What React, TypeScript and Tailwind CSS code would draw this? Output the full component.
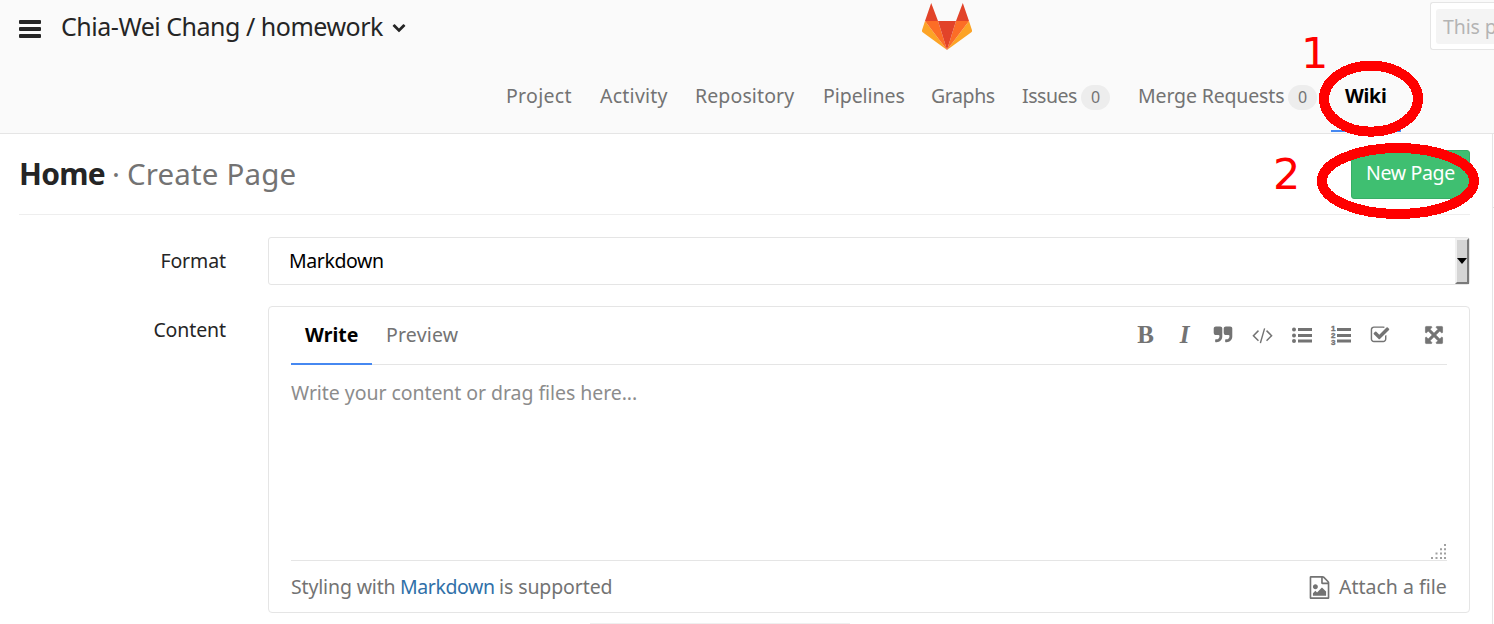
import type { ReactNode } from 'react';

const quotePath =
  'M832 320v704q0 104-40.5 198.5t-109.5 163.5-163.5 109.5-198.5 40.5h-64q-26 0-45-19t-19-45v-128q0-26 19-45t45-19h64q106 0 181-75t75-181v-32q0-40-28-68t-68-28h-224q-80 0-136-56t-56-136v-384q0-80 56-136t136-56h384q80 0 136 56t56 136zm896 0v704q0 104-40.5 198.5t-109.5 163.5-163.5 109.5-198.5 40.5h-64q-26 0-45-19t-19-45v-128q0-26 19-45t45-19h64q106 0 181-75t75-181v-32q0-40-28-68t-68-28h-224q-80 0-136-56t-56-136v-384q0-80 56-136t136-56h384q80 0 136 56t56 136z';
const codePath =
  'M617 1399l-50 50q-10 10-23 10t-23-10l-466-466q-10-10-10-23t10-23l466-466q10-10 23-10t23 10l50 50q10 10 10 23t-10 23l-393 393 393 393q10 10 10 23t-10 23zm591-1067l-373 1291q-4 13-15.5 19.5t-23.5 2.5l-62-17q-13-4-19.5-15.5t-2.5-24.5l373-1291q4-13 15.5-19.5t23.5-2.5l62 17q13 4 19.5 15.5t2.5 24.5zm657 651l-466 466q-10 10-23 10t-23-10l-50-50q-10-10-10-23t10-23l393-393-393-393q-10-10-10-23t10-23l50-50q10-10 23-10t23 10l466 466q10 10 10 23t-10 23z';
const checkPath =
  'M1472 930v318q0 119-84.5 203.5t-203.5 84.5h-832q-119 0-203.5-84.5t-84.5-203.5v-832q0-119 84.5-203.5t203.5-84.5h832q63 0 117 25 15 7 18 23 3 17-9 29l-49 49q-10 10-23 10-3 0-9-2-23-6-45-6h-832q-66 0-113 47t-47 113v832q0 66 47 113t113 47h832q66 0 113-47t47-113v-254q0-13 9-22l64-64q10-10 23-10 6 0 12 3 20 8 20 29zm231-489l-814 814q-24 24-57 24t-57-24l-430-430q-24-24-24-57t24-57l110-110q24-24 57-24t57 24l263 263 647-647q24-24 57-24t57 24l110 110q24 24 24 57t-24 57z';
const expandPath =
  'M1411 541l-355 355 355 355 144-144q29-31 70-14 39 17 39 59v448q0 26-19 45t-45 19h-448q-42 0-59-40-17-39 14-69l144-144-355-355-355 355 144 144q31 30 14 69-17 40-59 40h-448q-26 0-45-19t-19-45v-448q0-42 40-59 39-17 69 14l144 144 355-355-355-355-144 144q-19 19-45 19-12 0-24-5-40-17-40-59v-448q0-26 19-45t45-19h448q42 0 59 40 17 39-14 69l-144 144 355 355 355-355-144-144q-31-30-14-69 17-40 59-40h448q26 0 45 19t19 45v448q0 42-39 59-13 5-25 5-26 0-45-19z';
const imageFilePath =
  'M1596 380q28 28 48 76t20 88v1152q0 40-28 68t-68 28h-1344q-40 0-68-28t-28-68v-1600q0-40 28-68t68-28h896q40 0 88 20t76 48zm-444-244v376h376q-10-29-22-41l-313-313q-12-12-41-22zm384 1528v-1024h-416q-40 0-68-28t-28-68v-416h-768v1536h1280zm-128-448v320h-1024v-192l192-192 128 128 384-384zm-832-192q-80 0-136-56t-56-136 56-136 136-56 136 56 56 136-56 136-136 56z';
const chevronPath =
  'M1683 808l-742 741q-19 19-45 19t-45-19l-742-741q-19-19-19-45.5t19-45.5l166-165q19-19 45-19t45 19l531 531 531-531q19-19 45-19t45 19l166 165q19 19 19 45.5t-19 45.5z';

function Logo() {
  return (
    <svg width="50" height="47" viewBox="0 0 50 47">
      <path fill="#e24329" d="M9.2 0 16 18H3zM40.8 0 47 18H34z" />
      <path fill="#fca326" d="M3 18 0 27.2Q-.3 28.600 1 29.500L25 47zM47 18l3 9.200q.3 1.400-1 2.300L25 47z" />
      <path fill="#fc6d26" d="M3 18h13l9 29zM47 18H34l-9 29z" />
      <path fill="#e24329" d="M16 18h18l-9 29z" />
    </svg>
  );
}

function NavItem({ width, label, tracking, badge }: { width: string; label: string; tracking: string; badge?: string }) {
  return (
    <a className={`flex items-center justify-between whitespace-nowrap ${width}`}>
      <span className={tracking}>{label}</span>
      {badge !== undefined && (
        <span className="mr-[28px] mt-[2px] flex h-[25px] w-[29px] items-center justify-center rounded-full bg-[#ededed] text-[16px]">
          {badge}
        </span>
      )}
    </a>
  );
}

function Tool({ children }: { children: ReactNode }) {
  return <button className="flex h-6 w-[39px] items-center justify-center">{children}</button>;
}

function Header() {
  return (
    <header className="flex h-[134px] flex-col border-b border-[#e5e5e5] bg-[#fafafa]">
      <div className="flex h-[57px] items-start">
        <svg className="ml-[19px] mt-[20px]" width="22" height="18" fill="#252525">
          <rect width="22" height="4" rx="1" />
          <rect y="7" width="22" height="4" rx="1" />
          <rect y="14" width="22" height="4" rx="1" />
        </svg>
        <h1 className="ml-[20px] mt-[6px] w-[331px] whitespace-nowrap text-[25px] leading-[40px] tracking-[-0.48px] text-[#252525]">
          Chia-Wei Chang / homework
        </h1>
        <svg className="mt-[20px]" width="14" height="14" viewBox="0 0 1792 1792" fill="#252525">
          <path d={chevronPath} />
        </svg>
        <div className="ml-[516px] mt-[3px]">
          <Logo />
        </div>
        <div className="ml-auto mt-[2px] flex h-[48px] w-[64px] items-center rounded-l-[3px] border border-r-0 border-[#e5e5e5] bg-white pl-[5px]">
          <div className="h-[35px] w-full overflow-hidden whitespace-nowrap rounded-l-[3px] bg-[#f4f4f4] pl-[7px] leading-[35px] tracking-[-0.1px] text-[#b4b4b4]">
            This p
          </div>
        </div>
      </div>
      <nav className="flex h-[76px] pl-[506px] pt-[2px] text-[#737373]">
        <NavItem width="w-[94px]" label="Project" tracking="tracking-[0.3px]" />
        <NavItem width="w-[95px]" label="Activity" tracking="tracking-[0.25px]" />
        <NavItem width="w-[128px]" label="Repository" tracking="tracking-[0.12px]" />
        <NavItem width="w-[108px]" label="Pipelines" tracking="tracking-[-0.05px]" />
        <NavItem width="w-[91px]" label="Graphs" tracking="tracking-[-0.4px]" />
        <NavItem width="w-[116px]" label="Issues" tracking="tracking-[-0.45px]" badge="0" />
        <NavItem width="w-[207px]" label="Merge Requests" tracking="tracking-[-0.15px]" badge="0" />
        <a className="-ml-[14px] flex h-[73px] w-[70px] items-center border-b-2 border-[#4688f1] pl-[14px] pt-[3px] font-bold tracking-[-0.3px] text-black">
          Wiki
        </a>
      </nav>
    </header>
  );
}

function Toolbar() {
  return (
    <div className="ml-auto mr-[-6px] flex h-[56px] items-center text-[#737373]">
      <Tool>
        <span className="font-['Liberation_Serif'] text-[25px] font-bold leading-6">B</span>
      </Tool>
      <Tool>
        <span className="font-['Liberation_Serif'] text-[25px] font-bold italic leading-6">I</span>
      </Tool>
      <Tool>
        <svg className="mr-[2px]" width="20" height="20" viewBox="0 0 1792 1792" fill="currentColor"><path d={quotePath} /></svg>
      </Tool>
      <Tool>
        <svg width="21" height="20" viewBox="0 0 1920 1792" fill="currentColor"><path d={codePath} /></svg>
      </Tool>
      <Tool>
        <svg width="20" height="16" viewBox="0 0 20 16" fill="currentColor">
          <circle cx="2" cy="2.500" r="2" /><circle cx="2" cy="8.500" r="2" /><circle cx="2" cy="14" r="2" />
          <path d="M6 1h14v3H6zM6 7h14v3H6zM6 12.500h14v3H6z" />
        </svg>
      </Tool>
      <Tool>
        <svg width="20" height="22" viewBox="0 -1 20 22" fill="currentColor" stroke="currentColor" strokeWidth="0" className="overflow-visible font-['Liberation_Sans'] text-[8px] font-bold">
          <text x="0" y="5.500" strokeWidth="0.4">1</text><text x="0" y="12.500" strokeWidth="0.4">2</text><text x="0" y="19.500" strokeWidth="0.4">3</text>
          <path d="M6 3h14v3H6zM6 9h14v3H6zM6 14.500h14v3H6z" />
        </svg>
      </Tool>
      <Tool>
        <svg width="20" height="20" viewBox="0 0 1792 1792" fill="currentColor"><path d={checkPath} /></svg>
      </Tool>
      <span className="w-[15px]" />
      <Tool>
        <svg width="20" height="20" viewBox="0 0 1792 1792" fill="currentColor" stroke="currentColor" strokeWidth="60"><path d={expandPath} /></svg>
      </Tool>
    </div>
  );
}

function Editor() {
  return (
    <div className="flex h-[307px] w-[1202px] flex-col rounded-[4px] border border-[#e5e5e5] px-[22px]">
      <div className="flex h-[58px] border-b border-[#e5e5e5]">
        <button className="flex h-[58px] w-[81px] items-center border-b-2 border-[#4688f1] pl-[14px] font-bold text-black">
          Write
        </button>
        <button className="flex h-[56px] items-center pl-[14px] tracking-[0.2px] text-[#737373]">Preview</button>
        <Toolbar />
      </div>
      <div className="flex h-[196px] justify-between border-b border-[#e5e5e5]">
        <p className="mt-[13px] leading-[30px] tracking-[-0.06px] text-[#8c8c8c]">Write your content or drag files here...</p>
        <svg className="mr-px mt-auto mb-px" width="15" height="15" fill="#a0a0a0">
          <path d="M13 0h2v2h-2zM9 4.300h2v2H9zM13 4.300h2v2h-2zM4.500 8.600h2v2h-2zM9 8.600h2v2H9zM13 8.600h2v2h-2zM0 13h2v2H0zM4.500 13h2v2h-2zM9 13h2v2H9zM13 13h2v2h-2z" />
        </svg>
      </div>
      <div className="flex h-[51px] items-center whitespace-nowrap text-[#737373]">
        <span className="w-[109px] tracking-[-0.15px]">Styling with</span>
        <a className="w-[99px] tracking-[-0.4px] text-[#3070a8]">Markdown</a>
        <span className="tracking-[-0.1px]">is supported</span>
        <svg className="ml-auto mt-[2px]" width="23" height="23" viewBox="0 0 1792 1792" fill="currentColor">
          <path d={imageFilePath} />
        </svg>
        <span className="ml-[8px] w-[108px]">Attach a file</span>
      </div>
    </div>
  );
}

export default function App() {
  return (
    <div className="relative h-[624px] w-[1494px] overflow-hidden bg-white font-['Noto_Sans',sans-serif] text-[19.5px] leading-[30px] text-[#252525]">
      <Header />
      <div className="flex">
        <main className="h-[490px] w-[1493px] border-r border-[#e5e5e5] pl-[19px]">
          <div className="flex h-[81px] w-[1451px] justify-between border-b border-[#eeeeee]">
            <h2 className="mt-[20px] flex whitespace-nowrap leading-[40px]">
              <span className="w-[93px] text-[30px] font-bold tracking-[-0.7px]">Home</span>
              <span className="w-[15px] text-[29.5px] text-[#737373]">·</span>
              <span className="text-[29.5px] tracking-[0.15px] text-[#737373]">Create Page</span>
            </h2>
            <button className="mt-[16px] h-[49px] w-[119px] whitespace-nowrap rounded-[3px] border border-[#38ae67] bg-[#3fbf71] pb-[4px] text-center tracking-[-0.35px] text-white">
              New Page
            </button>
          </div>
          <div className="mt-[22px] flex">
            <label className="w-[249px] pr-[42px] pt-[9px] text-right tracking-[-0.1px]">Format</label>
            <div className="flex h-[48px] w-[1202px] justify-between rounded-[3px] border border-[#e5e5e5] pl-[20px]">
              <span className="pt-[8px] tracking-[-0.4px] text-black">Markdown</span>
              <span className="flex h-[46px] w-[14px] items-center justify-center border-2 border-b-[#7a7a7a] border-l-[#f1f1f1] border-r-[#7a7a7a] border-t-[#f1f1f1] bg-[#d5d5d5]">
                <svg width="10" height="6" className="shrink-0"><path d="M0 0h10L5 6z" /></svg>
              </span>
            </div>
          </div>
          <div className="mt-[21px] flex">
            <label className="w-[249px] pr-[42px] pt-[9px] text-right tracking-[-0.1px]">Content</label>
            <Editor />
          </div>
          <div className="ml-[571px] mt-[10px] h-px w-[260px] bg-[#efefef]" />
        </main>
        <div className="mt-[73px] h-px w-px bg-[#e5e5e5]" />
      </div>
      <svg className="pointer-events-none absolute left-0 top-0" width="1494" height="624" fill="none" stroke="#ff0000" strokeWidth="10" shapeRendering="crispEdges">
        <ellipse cx="1371" cy="98.700" rx="47" ry="33" />
        <ellipse cx="1398" cy="181" rx="76" ry="33" />
      </svg>
      <span className="absolute left-[1301px] top-[28px] font-['DejaVu_Sans'] text-[43px] leading-[50px] text-[#ff0000]">1</span>
      <span className="absolute left-[1273px] top-[149px] font-['DejaVu_Sans'] text-[43px] leading-[50px] text-[#ff0000]">2</span>
    </div>
  );
}
